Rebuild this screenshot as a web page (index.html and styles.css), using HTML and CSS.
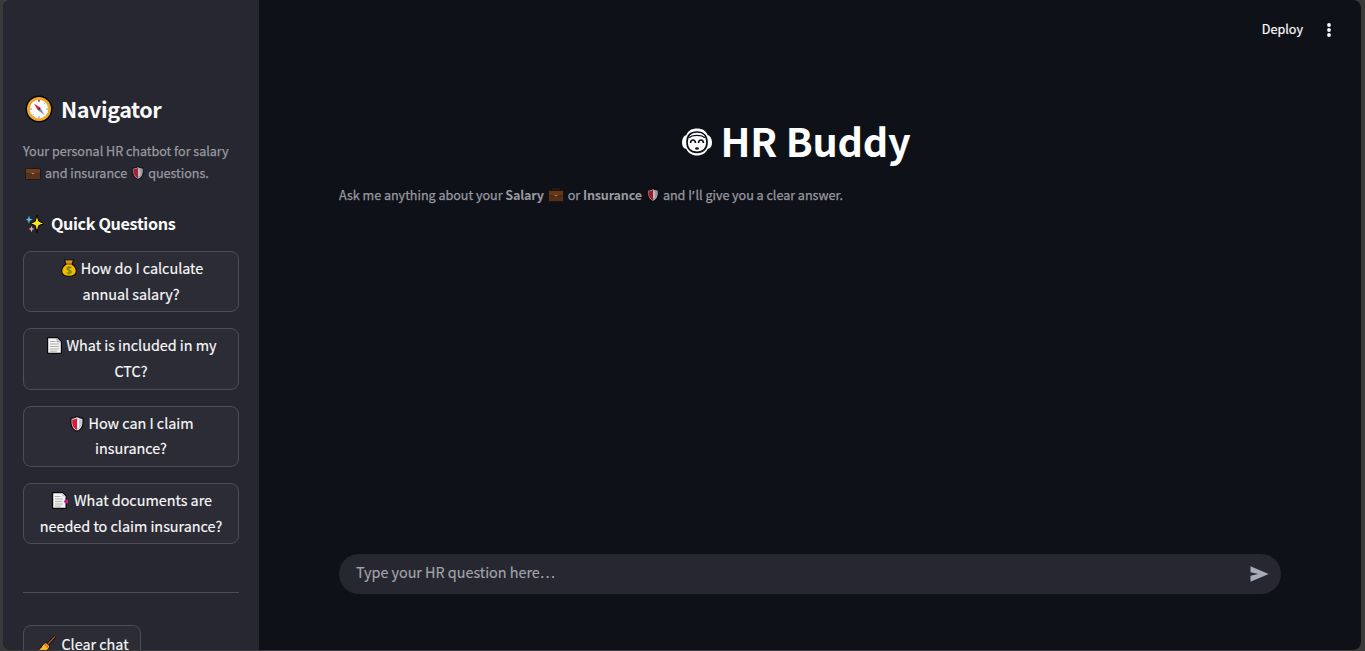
FILE: index.html
```html
<!DOCTYPE html>
<html lang="en">
<head>
<meta charset="utf-8">
<title>HR Buddy</title>
<link rel="stylesheet" href="styles.css">
</head>
<body>
<svg class="defs" aria-hidden="true">
  <symbol id="briefcase" viewBox="0 0 16 14">
    <path d="M5 3V1h6v2" fill="none" stroke="#3a2114" stroke-width="1.6"/>
    <rect x=".5" y="2.5" width="15" height="11" rx="1" fill="#673719" stroke="#21150f"/>
    <path d="M1 3h14v4l-5 1H6L1 7z" fill="#7c441f"/>
    <path d="M1 7l5 1.300h4L15 7" fill="none" stroke="#4b2816" stroke-width=".7"/>
    <rect x="6.800" y="7" width="2.400" height="1.200" fill="#e0a040"/>
  </symbol>
  <symbol id="shield" viewBox="0 0 14 16">
    <path d="M7 .6C9 2 11 2.300 13 2.300v4.700c0 4-2.500 6.800-6 8.400C3.500 13.800 1 11 1 7V2.300C3 2.300 5 2 7 .6z" fill="#eee" stroke="#08080b" stroke-width="1.200"/>
    <path d="M7 2.200v11.800C4.200 12.500 2.200 10.200 2.200 7V3.500C4 3.500 5.500 3.100 7 2.200z" fill="#dc1738"/>
    <path d="M7 2.200v11.800c2.800-1.500 4.800-3.800 4.800-7V3.500C10 3.500 8.500 3.100 7 2.200z" fill="#c6c6c9"/>
    <path d="M8.200 3.500v8" stroke="#fff" stroke-width="1.800"/>
  </symbol>
</svg>
<div class="app">
  <aside class="sidebar">
    <h2 class="nav-title">
      <svg class="compass" viewBox="0 0 28 28"><circle cx="14" cy="14" r="13.400" fill="#0b0907"/><circle cx="14" cy="14" r="12" fill="#f0a92f"/><circle cx="14" cy="14" r="9.200" fill="#fff"/><path d="M14 5v2M14 21v2M5 14h2M21 14h2M7.700 20.300l1-1M19.300 8.700l1-1" stroke="#849aae" stroke-width="1"/><path d="M14 4.800v2" stroke="#d3213f" stroke-width="1.300"/><path d="M9 8.500l6.500 4.200-2.600 2.600z" fill="#d42140"/><path d="M15.500 12.700l4 7.200-6.600-4.600z" fill="#8b8fa0"/><circle cx="14.200" cy="14" r="1" fill="#333"/></svg>
      <span>Navigator</span>
    </h2>
    <p class="caption side-caption">Your personal HR chatbot for salary<br><svg class="case"><use href="#briefcase"/></svg>and insurance<svg class="guard"><use href="#shield"/></svg>questions.</p>
    <h3 class="quick-title">
      <svg class="sparkles" viewBox="0 0 20 20"><path d="M12 1l1.700 6.200L19 9.500l-5.300 2.100-1.700 7-1.700-7-5-2.100 5-2.300z" fill="#ffe51c" stroke="#050505" stroke-width="1"/><path d="M4 1.500l1 3.200L8 5.500l-3 1-1 3.200-1-3.200L.5 5.500l2.500-.8z" fill="#55c2df"/><path d="M6.500 12l.9 2.200 2.100.8-2.100.8-.9 2.500-.9-2.500-2.200-.8 2.200-.8z" fill="#f2a7a5"/></svg>
      <span>Quick Questions</span>
    </h3>
    <div class="questions">
      <button class="btn"><svg class="bag" viewBox="0 0 16 18"><path d="M3.500 1h9l-1.700 4C14 7 15.300 9.500 15.300 12c0 3.500-2.500 5.300-7.300 5.300S.7 15.500.7 12C.7 9.500 2 7 5.200 5z" fill="#f6b900" stroke="#100e08" stroke-width="1.200"/><path d="M4.500 1.800h7l-1 2.700h-5z" fill="#d9912b"/><path d="M5 5h6" stroke="#7b4b18"/><path d="M10.400 8.800C8.500 7.500 5.800 8 5.900 9.700c.1 2 4.300 1.200 4.400 3.100.1 1.700-2.800 2.100-4.700.9M8 7v8.500" fill="none" stroke="#648a12" stroke-width="1.200"/></svg>How do I calculate<br>annual salary?</button>
      <button class="btn"><svg class="page" viewBox="0 0 15 17"><path d="M.6.600h9.900l3.900 3.900v11.900H.6z" fill="#f3f3f3" stroke="#08080b" stroke-width="1.200"/><path d="M10 1v4h4z" fill="#d3d3d3" stroke="#777" stroke-width=".5"/><path d="M3 4.500h5.500M3 7h9M3 9.500h9M3 12h9M3 14.200h7" stroke="#a9a9ac" stroke-width=".9"/></svg>What is included in my<br>CTC?</button>
      <button class="btn"><svg class="btn-guard"><use href="#shield"/></svg>How can I claim<br>insurance?</button>
      <button class="btn"><svg class="tab-page" viewBox="0 0 17 17"><path d="M.6.600h10l3.500 3.500v12.300H.6z" fill="#f3f3f3" stroke="#08080b" stroke-width="1.200"/><path d="M10 1v3.500h4" fill="#ccc"/><path d="M3 4.500h5.500M3 7h8M3 9.500h7M3 12h8M3 14.200h6" stroke="#aaa" stroke-width=".9"/><path d="M13.300 7.800h2.700v3.400h-2.700l-1.700-1.700z" fill="#d6178b"/></svg>What documents are<br>needed to claim insurance?</button>
    </div>
    <hr class="divider">
    <button class="btn clear"><svg class="broom" viewBox="0 0 18 18"><path d="M9.500 9.500L17 1.500" stroke="#050505" stroke-width="3"/><path d="M9.500 9.500L17 1.500" stroke="#a65d28" stroke-width="1.300"/><path d="M8 7.500l3.500 3.300c.4 2.500-2.500 5-5.500 6.200H2L.8 14.500C4 13 4 8.500 8 7.500z" fill="#ffb52c" stroke="#080706"/><path d="M6.500 8.800l4 3.900" stroke="#dc6c2c" stroke-width="1.400"/></svg>Clear chat</button>
  </aside>
  <main class="main">
    <header class="toolbar">
      <span class="deploy">Deploy</span>
      <svg class="kebab" viewBox="0 0 4 14"><circle cx="2" cy="2" r="1.900"/><circle cx="2" cy="7" r="1.900"/><circle cx="2" cy="12" r="1.900"/></svg>
    </header>
    <section class="content">
      <h1 class="title">
        <svg class="face" viewBox="0 0 32 28"><path d="M16 .5c5 0 8.800 2 10.700 6.500C29.500 8 31 11 31 14.500c0 3.500-1.500 6-4.300 6.500-2 4.300-5.700 6.500-10.700 6.500S7.300 25.300 5.300 21C2.500 20.500 1 18 1 14.500S2.500 8 5.300 7C7.200 2.500 11 .5 16 .5z" fill="#fff"/><path d="M16 4c6.600 0 10 3.800 10 10.300 0 6.300-3.600 10-10 10s-10-3.700-10-10C6 7.800 9.400 4 16 4z" fill="none" stroke="#0e1117" stroke-width="1.700"/><path d="M8 10c1.800-2.300 4.600-2.700 8-2.700s6.200.4 8 2.700" fill="none" stroke="#0e1117" stroke-width="1.200"/><path d="M9.500 15c.5-4 4.500-4 5 0M17.500 15c.5-4 4.500-4 5 0" fill="none" stroke="#0e1117" stroke-width="1.700"/><ellipse cx="16" cy="20.500" rx="1.900" ry="1.200" fill="#0e1117"/></svg>
        <span>HR Buddy</span>
      </h1>
      <p class="caption main-caption">Ask me anything about your <b>Salary</b><svg class="case"><use href="#briefcase"/></svg>or <b>Insurance</b><svg class="guard"><use href="#shield"/></svg>and I<span class="apostrophe">’</span>ll give you a clear answer.</p>
    </section>
    <div class="chat-input">
      <span class="placeholder">Type your HR question here…</span>
      <svg class="send" viewBox="0 0 19 16"><path d="M.5.300L18.700 8 .5 15.700V9.800L8.200 8 .5 6.200z"/></svg>
    </div>
  </main>
</div>
</body>
</html>
```
FILE: styles.css
```css
* { box-sizing: border-box; }
body {
  margin: 0;
  height: 651px;
  padding: 0 4px 1px 3px;
  overflow: hidden;
  background: #3a3a3a;
  color: #fafafa;
  font: 14.4px/25.6px "Noto Sans CJK SC", "Noto Sans", sans-serif;
}
.defs { position: absolute; width: 0; height: 0; }
h1, h2, h3, p { margin: 0; }
.app { display: flex; height: 650px; overflow: hidden; border-radius: 8px; background: #0e1117; }
.sidebar { flex: none; width: 256px; height: 650px; padding: 93px 20px 0; background: #262730; overflow: hidden; }
.nav-title { display: flex; align-items: center; height: 32px; font-size: 21.6px; font-weight: 600; line-height: 32px; letter-spacing: -.45px; }
.compass { width: 28px; height: 28px; margin: 0 8px 0 2px; }
.caption { font-size: 12.6px; line-height: 22.4px; color: #999aa0; white-space: nowrap; -webkit-text-stroke: .25px currentColor; letter-spacing: -.03px; }
.caption b { letter-spacing: -.2px; -webkit-text-stroke: 0; }
.side-caption { margin-top: 15px; }
.case { width: 16px; height: 14px; margin: 0 4px 0 2px; vertical-align: -2px; opacity: .8; }
.guard { width: 12px; height: 14px; margin: 0 4px 0 5px; vertical-align: -2px; opacity: .75; }
.quick-title { display: flex; align-items: center; height: 28px; margin-top: 25px; font-size: 16.2px; font-weight: 600; letter-spacing: -.36px; }
.sparkles { width: 20px; height: 20px; margin: 0 6px 0 2px; }
.questions { display: flex; flex-direction: column; gap: 16px; margin-top: 13px; }
.btn {
  display: block;
  width: 216px;
  height: 61.4px;
  padding: 3px 0 5px;
  border: 1px solid #4c4d56;
  border-radius: 8px;
  background: #2b2c36;
  color: #fafafa;
  font: inherit;
  letter-spacing: -.02px;
  text-align: center;
  white-space: nowrap;
  -webkit-text-stroke: .15px currentColor;
}
.btn svg { vertical-align: -3px; margin: 0 4px 0 2px; }
.bag { width: 16px; height: 18px; }
.page { width: 15px; height: 17px; }
.btn-guard { width: 14px; height: 16px; }
.tab-page { width: 17px; height: 17px; }
.btn .tab-page { margin-right: 5px; }
.divider { height: 1px; margin: 48px 0 32px; border: 0; background: #4c4d56; }
.clear { width: 118px; height: 40px; padding: 4px 0 8px; }
.btn.clear svg { width: 18px; height: 18px; margin: 0 5px 0 3px; }
.main { flex: 1; display: flex; flex-direction: column; min-width: 0; }
.toolbar { display: flex; justify-content: flex-end; align-items: center; height: 60px; padding-right: 30px; }
.deploy { margin: 0 24px 2px 0; font-size: 12.6px; -webkit-text-stroke: .2px currentColor; }
.kebab { width: 4px; height: 14px; fill: #fafafa; }
.content { flex: 1; padding: 53px 80px 0; }
.title { display: flex; justify-content: center; align-items: center; height: 53px; padding-right: 28px; color: #fff; font-size: 39.6px; font-weight: 700; line-height: 53px; white-space: nowrap; letter-spacing: -.2px; }
.face { width: 32px; height: 28px; margin: 5px 7px 0 0; }
.main-caption { margin-top: 18px; }
.main-caption .case { margin-left: 4px; }
.apostrophe { padding: 0 1px 0 .5px; font-family: "Noto Sans", sans-serif; line-height: 1; }
.chat-input { display: flex; align-items: center; justify-content: space-between; width: 942px; height: 40px; margin: 0 0 56px 80px; padding: 0 12px 0 17px; border-radius: 20px; background: #262730; }
.placeholder { margin-bottom: 5px; color: #a3a4aa; letter-spacing: -.03px; -webkit-text-stroke: .15px currentColor; }
.send { width: 19px; height: 16px; fill: #a5abba; }
```
